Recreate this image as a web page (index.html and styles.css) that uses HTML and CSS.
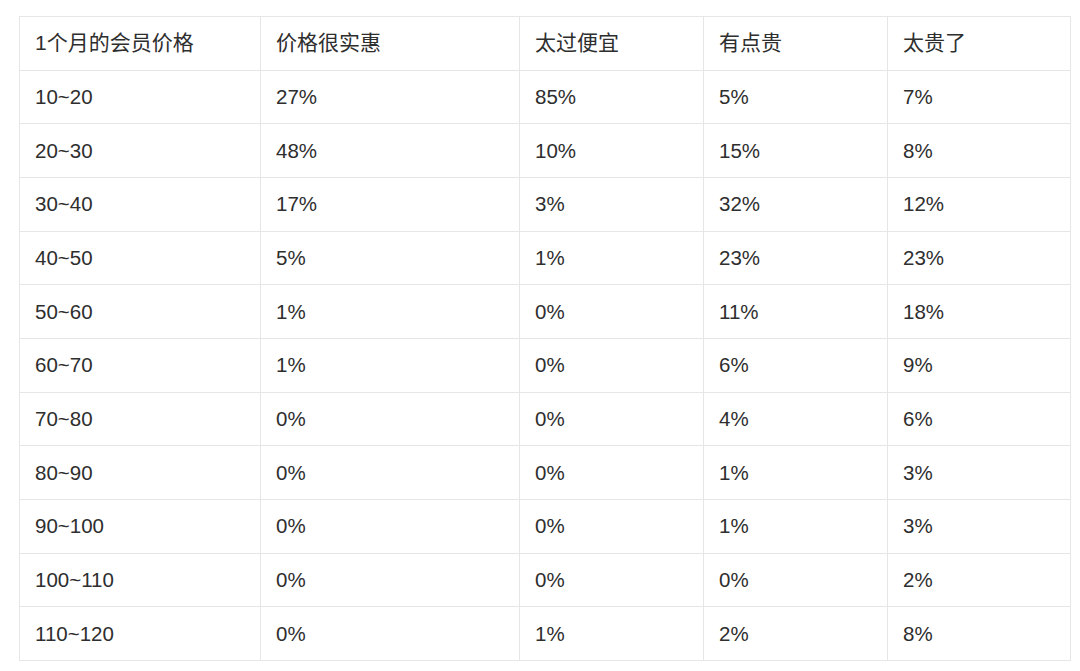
FILE: index.html
```html
<!DOCTYPE html>
<html lang="zh">
<head>
<meta charset="utf-8">
<link rel="stylesheet" href="styles.css">
</head>
<body>
<table class="price-table">
  <colgroup>
    <col class="c1"><col class="c2"><col class="c3"><col class="c4"><col class="c5">
  </colgroup>
  <thead>
    <tr><th>1个月的会员价格</th><th>价格很实惠</th><th>太过便宜</th><th>有点贵</th><th>太贵了</th></tr>
  </thead>
  <tbody>
    <tr><td>10~20</td><td>27%</td><td>85%</td><td>5%</td><td>7%</td></tr>
    <tr><td>20~30</td><td>48%</td><td>10%</td><td>15%</td><td>8%</td></tr>
    <tr><td>30~40</td><td>17%</td><td>3%</td><td>32%</td><td>12%</td></tr>
    <tr><td>40~50</td><td>5%</td><td>1%</td><td>23%</td><td>23%</td></tr>
    <tr><td>50~60</td><td>1%</td><td>0%</td><td>11%</td><td>18%</td></tr>
    <tr><td>60~70</td><td>1%</td><td>0%</td><td>6%</td><td>9%</td></tr>
    <tr><td>70~80</td><td>0%</td><td>0%</td><td>4%</td><td>6%</td></tr>
    <tr><td>80~90</td><td>0%</td><td>0%</td><td>1%</td><td>3%</td></tr>
    <tr><td>90~100</td><td>0%</td><td>0%</td><td>1%</td><td>3%</td></tr>
    <tr><td>100~110</td><td>0%</td><td>0%</td><td>0%</td><td>2%</td></tr>
    <tr><td>110~120</td><td>0%</td><td>1%</td><td>2%</td><td>8%</td></tr>
  </tbody>
</table>
</body>
</html>
```
FILE: styles.css
```css
html, body {
  margin: 0;
  padding: 0;
  background: #ffffff;
}
body {
  padding: 16px 0 0 19px;
  font-family: "Liberation Sans", "Noto Sans CJK SC", sans-serif;
  color: #2e2e2e;
}
.price-table {
  border-collapse: collapse;
  table-layout: fixed;
  width: 1051px;
  font-size: 20.5px;
}
.c1 { width: 241px; }
.c2 { width: 259px; }
.c3 { width: 184px; }
.c4 { width: 184px; }
.c5 { width: 183px; }
.price-table tr {
  height: 53.67px;
}
.price-table th,
.price-table td {
  border: 1px solid #e6e6e6;
  padding: 0 0 0 15px;
  text-align: left;
  font-weight: normal;
  vertical-align: middle;
  white-space: nowrap;
  line-height: 24px;
}
.price-table th {
  font-size: 21px;
}
```
